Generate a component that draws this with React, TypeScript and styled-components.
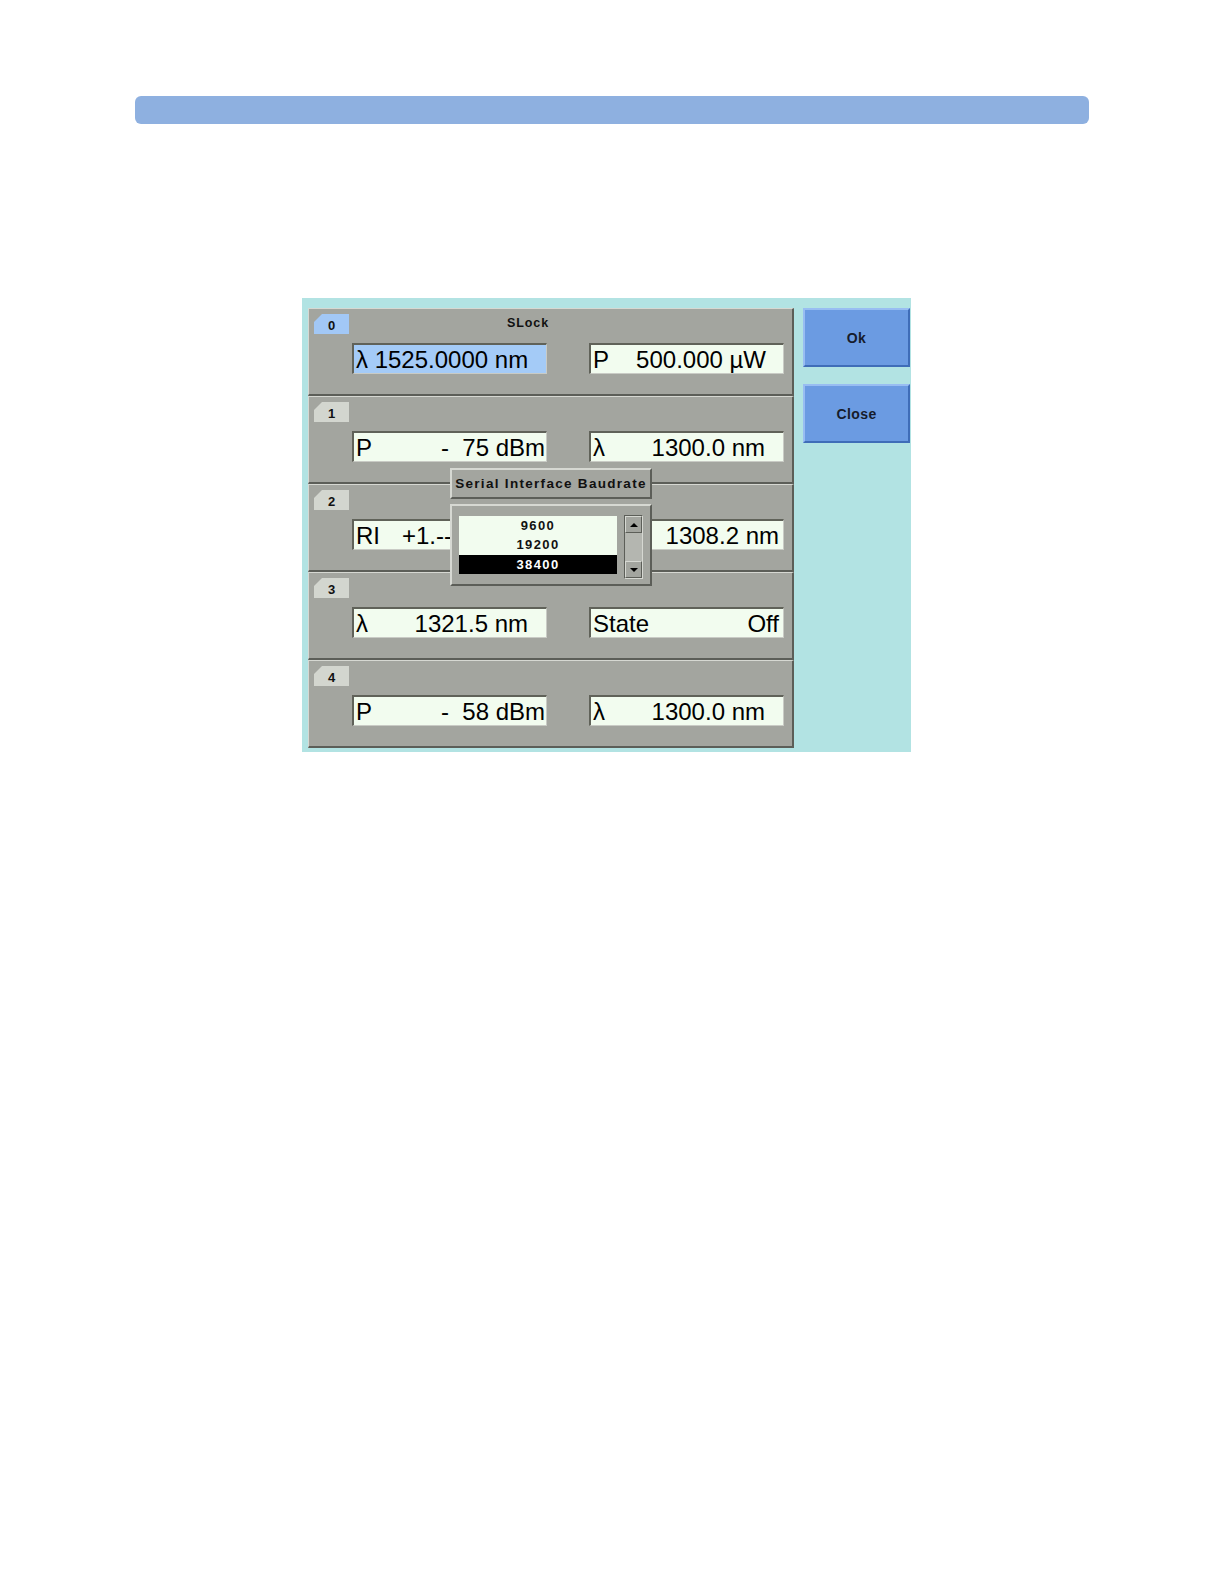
import React from 'react'
import styled, { createGlobalStyle } from 'styled-components'

const GlobalStyle = createGlobalStyle`
    body {
        margin: 0;
        background: #ffffff;
        font-family: "Liberation Sans", Arial, sans-serif;
    }
`

const GRAY = '#a3a59f'
const LIGHT = '#d6d8d2'
const DARK = '#5c5e58'

interface FieldData {
    label: string
    value?: string
    pad?: number
    offset?: number
}

interface RowData {
    id: string
    active?: boolean
    title?: string
    left: FieldData & { selected?: boolean }
    right: FieldData
}

const rows: RowData[] = [
    { id: '0', active: true, title: 'SLock', left: { label: 'λ 1525.0000 nm', selected: true }, right: { label: 'P', value: '500.000 µW', pad: 17 } },
    { id: '1', left: { label: 'P', value: '-  75 dBm', pad: 1 }, right: { label: 'λ', value: '1300.0 nm', pad: 18 } },
    { id: '2', left: { label: 'RI', value: '+1.---- dB', offset: 22 }, right: { label: 'λ', value: '1308.2 nm', pad: 4 } },
    { id: '3', left: { label: 'λ', value: '1321.5 nm', pad: 18 }, right: { label: 'State', value: 'Off', pad: 4 } },
    { id: '4', left: { label: 'P', value: '-  58 dBm', pad: 1 }, right: { label: 'λ', value: '1300.0 nm', pad: 18 } },
]

const bauds = ['9600', '19200', '38400']

const Page = styled.div`
    padding-top: 96px;
    padding-bottom: 200px;
`

const TopBar = styled.div`
    margin-left: 135px;
    width: 954px;
    height: 28px;
    border-radius: 6px;
    background: #8eb0e0;
`

const Screen = styled.div`
    position: relative;
    margin: 174px 0 0 302px;
    width: 609px;
    height: 454px;
    box-sizing: border-box;
    padding: 10px 1px 3px 6px;
    display: flex;
    gap: 9px;
    background: #b2e3e3;
`

const Panels = styled.div`
    width: 486px;
    display: flex;
    flex-direction: column;
`

const Row = styled.div`
    height: 88px;
    box-sizing: border-box;
    background: ${GRAY};
    border-top: 1px solid ${LIGHT};
    border-left: 1px solid ${LIGHT};
    border-right: 2px solid ${DARK};
    border-bottom: 2px solid ${DARK};
    padding: 5px 0 0 5px;
`

const Header = styled.div`
    display: flex;
    align-items: flex-start;
    height: 20px;
`

const Tab = styled.div<{ $active?: boolean }>`
    width: 35px;
    height: 20px;
    display: flex;
    align-items: center;
    justify-content: center;
    padding-top: 3px;
    box-sizing: border-box;
    background: ${(p) => (p.$active ? '#a2c8f6' : '#d3d6cf')};
    clip-path: polygon(8px 0, 100% 0, 100% 100%, 0 100%, 0 8px);
    font-size: 13px;
    font-weight: bold;
    color: #111;
`

const RowTitle = styled.div`
    margin: 2px 0 0 158px;
    font-size: 12.5px;
    font-weight: bold;
    letter-spacing: 0.9px;
    color: #111;
`

const Fields = styled.div`
    display: flex;
    gap: 42px;
    margin-top: 9px;
    padding-left: 38px;
`

const Field = styled.div<{ $selected?: boolean; $pad?: number }>`
    width: 195px;
    height: 31px;
    box-sizing: border-box;
    display: flex;
    align-items: center;
    padding: 1px ${(p) => p.$pad ?? 2}px 0 2px;
    background: ${(p) => (p.$selected ? '#a4cbf7' : '#f2fcef')};
    border-top: 2px solid #606259;
    border-left: 2px solid #606259;
    border-bottom: 1px solid #c9cbc5;
    border-right: 1px solid #c9cbc5;
    font-size: 24px;
    line-height: 28px;
    color: #000;
    white-space: pre;
    overflow: hidden;
`

const Value = styled.span<{ $offset?: number }>`
    margin-left: ${(p) => (p.$offset ? `${p.$offset}px` : 'auto')};
`

const Buttons = styled.div`
    display: flex;
    flex-direction: column;
    gap: 17px;
`

const Button = styled.div`
    width: 107px;
    height: 59px;
    box-sizing: border-box;
    display: flex;
    align-items: center;
    justify-content: center;
    background: #6b9be2;
    border-top: 2px solid #98bdf2;
    border-left: 2px solid #98bdf2;
    border-bottom: 2px solid #3f6db8;
    border-right: 2px solid #3f6db8;
    font-size: 14px;
    font-weight: bold;
    letter-spacing: 0.4px;
    color: #161c2c;
`

const Popup = styled.div`
    position: absolute;
    left: 148px;
    top: 170px;
    width: 202px;
    display: flex;
    flex-direction: column;
    gap: 5px;
`

const Bevel = styled.div`
    box-sizing: border-box;
    background: ${GRAY};
    border-top: 2px solid ${LIGHT};
    border-left: 2px solid ${LIGHT};
    border-bottom: 2px solid ${DARK};
    border-right: 2px solid ${DARK};
`

const PopupTitle = styled(Bevel)`
    height: 31px;
    display: flex;
    align-items: center;
    justify-content: center;
    font-size: 13.5px;
    font-weight: bold;
    letter-spacing: 1.3px;
    white-space: nowrap;
    color: #111;
`

const ListBox = styled(Bevel)`
    height: 82px;
    display: flex;
    align-items: flex-start;
    gap: 7px;
    padding: 9px 0 0 7px;
`

const List = styled.div`
    width: 158px;
    height: 58px;
    margin-top: 1px;
    background: #f2fcef;
    display: flex;
    flex-direction: column;
`

const ListItem = styled.div<{ $selected?: boolean }>`
    height: 19.33px;
    display: flex;
    align-items: center;
    justify-content: center;
    background: ${(p) => (p.$selected ? '#000' : 'transparent')};
    color: ${(p) => (p.$selected ? '#fff' : '#111')};
    font-size: 13px;
    font-weight: bold;
    letter-spacing: 1.4px;
`

const ScrollBar = styled.div`
    width: 19px;
    height: 64px;
    box-sizing: border-box;
    display: flex;
    flex-direction: column;
    justify-content: space-between;
    border-top: 1px solid ${DARK};
    border-left: 1px solid ${DARK};
    border-bottom: 1px solid ${LIGHT};
    border-right: 1px solid ${LIGHT};
    background: #b4b6b0;
`

const ScrollButton = styled.div`
    height: 17px;
    box-sizing: border-box;
    display: flex;
    align-items: center;
    justify-content: center;
    background: ${GRAY};
    border-top: 1px solid ${LIGHT};
    border-left: 1px solid ${LIGHT};
    border-bottom: 1px solid ${DARK};
    border-right: 1px solid ${DARK};
`

const Arrow = styled.div<{ $down?: boolean }>`
    width: 0;
    height: 0;
    border-left: 4px solid transparent;
    border-right: 4px solid transparent;
    ${(p) => (p.$down ? 'border-top: 4px solid #000;' : 'border-bottom: 4px solid #000;')}
`

const FieldBox = ({ f, selected }: { f: FieldData; selected?: boolean }) => (
    <Field $selected={selected} $pad={f.pad}>
        <span>{f.label}</span>
        {f.value && <Value $offset={f.offset}>{f.value}</Value>}
    </Field>
)

const App = () => {
    return (
        <>
            <GlobalStyle />
            <Page>
                <TopBar />
                <Screen>
                    <Panels>
                        {rows.map((r) => (
                            <Row key={r.id}>
                                <Header>
                                    <Tab $active={r.active}>{r.id}</Tab>
                                    {r.title && <RowTitle>{r.title}</RowTitle>}
                                </Header>
                                <Fields>
                                    <FieldBox f={r.left} selected={r.left.selected} />
                                    <FieldBox f={r.right} />
                                </Fields>
                            </Row>
                        ))}
                    </Panels>
                    <Buttons>
                        <Button>Ok</Button>
                        <Button>Close</Button>
                    </Buttons>
                    <Popup>
                        <PopupTitle>Serial Interface Baudrate</PopupTitle>
                        <ListBox>
                            <List>
                                {bauds.map((b) => (
                                    <ListItem key={b} $selected={b === '38400'}>{b}</ListItem>
                                ))}
                            </List>
                            <ScrollBar>
                                <ScrollButton><Arrow /></ScrollButton>
                                <ScrollButton><Arrow $down /></ScrollButton>
                            </ScrollBar>
                        </ListBox>
                    </Popup>
                </Screen>
            </Page>
        </>
    )
}

export default App
